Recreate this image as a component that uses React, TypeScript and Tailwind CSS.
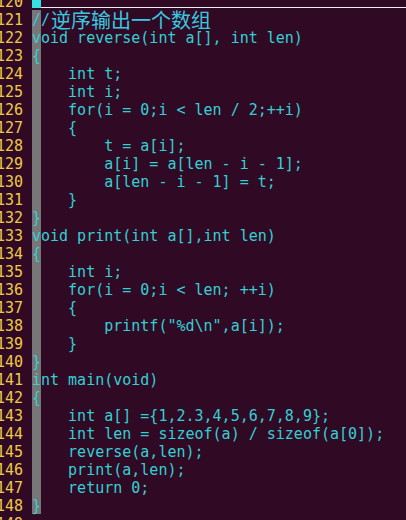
import React from "react";

const lines: { n: number; t: string; kind?: "cursor" | "comment" | "empty" }[] = [
  { n: 120, t: "", kind: "cursor" },
  { n: 121, t: "//逆序输出一个数组", kind: "comment" },
  { n: 122, t: "void reverse(int a[], int len)" },
  { n: 123, t: "{" },
  { n: 124, t: "    int t;" },
  { n: 125, t: "    int i;" },
  { n: 126, t: "    for(i = 0;i < len / 2;++i)" },
  { n: 127, t: "    {" },
  { n: 128, t: "        t = a[i];" },
  { n: 129, t: "        a[i] = a[len - i - 1];" },
  { n: 130, t: "        a[len - i - 1] = t;" },
  { n: 131, t: "    }" },
  { n: 132, t: "}" },
  { n: 133, t: "void print(int a[],int len)" },
  { n: 134, t: "{" },
  { n: 135, t: "    int i;" },
  { n: 136, t: "    for(i = 0;i < len; ++i)" },
  { n: 137, t: "    {" },
  { n: 138, t: '        printf("%d\\n",a[i]);' },
  { n: 139, t: "    }" },
  { n: 140, t: "}" },
  { n: 141, t: "int main(void)" },
  { n: 142, t: "{" },
  { n: 143, t: "    int a[] ={1,2.3,4,5,6,7,8,9};" },
  { n: 144, t: "    int len = sizeof(a) / sizeof(a[0]);" },
  { n: 145, t: "    reverse(a,len);" },
  { n: 146, t: "    print(a,len);" },
  { n: 147, t: "    return 0;" },
  { n: 148, t: "}" },
  { n: 149, t: "", kind: "empty" },
];

export default function App() {
  return (
    <div
      className="w-[406px] h-[520px] overflow-hidden bg-[#300a24] text-[15px] text-[#33d0d4]"
      style={{ fontFamily: '"DejaVu Sans Mono", "Noto Sans CJK SC", monospace' }}
    >
      <div className="mt-[-8px] flex flex-col">
        {lines.map((l) => (
          <div key={l.n} className="flex h-[18px] leading-[20px] whitespace-pre">
            <div className="w-[32px] shrink-0 flex justify-end pr-[9px] text-[#ecca45]">
              {String(l.n)}
            </div>
            {l.kind === "cursor" ? (
              <div className="flex flex-1 items-start">
                <div className="w-[9px] h-[16px] bg-[#34e2e2]" />
                <div className="flex-1 h-[16px] border-b border-[#f0f0f0]" />
              </div>
            ) : l.kind === "empty" ? (
              <div className="flex-1" />
            ) : l.kind === "comment" ? (
              <div className="flex flex-1 text-[#38c8e0]">
                <span className="w-[9px] h-[18px] shrink-0 bg-[#777777] overflow-visible">/</span>
                <span>/</span>
                <span
                  className="text-[20px] leading-[20px] ml-[1px]"
                  style={{ fontFamily: '"Noto Sans CJK SC", sans-serif' }}
                >
                  逆序输出一个数组
                </span>
              </div>
            ) : (
              <div className="flex flex-1">
                <span className="w-[9px] h-[18px] shrink-0 bg-[#777777] overflow-visible">
                  {l.t.charAt(0)}
                </span>
                <span>{l.t.slice(1)}</span>
              </div>
            )}
          </div>
        ))}
      </div>
    </div>
  );
}
